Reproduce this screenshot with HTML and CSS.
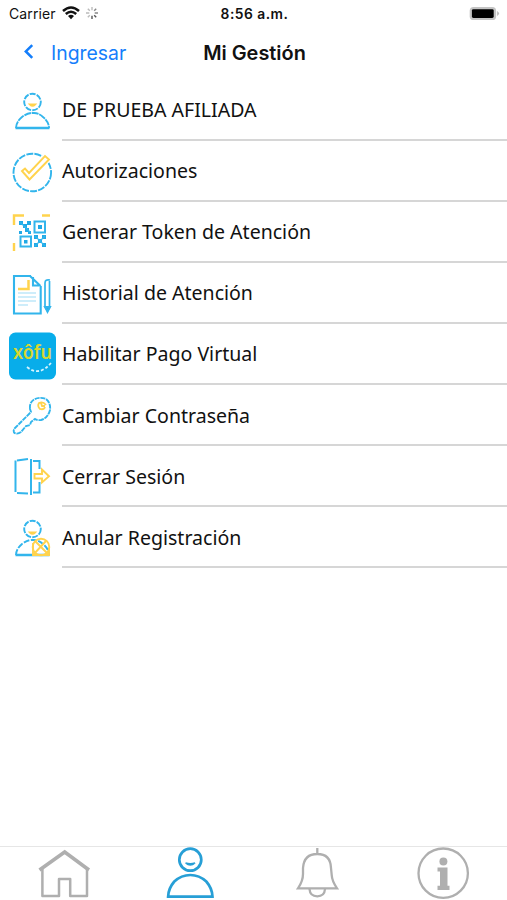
FILE: index.html
```html
<!DOCTYPE html>
<html lang="es">
<head>
<meta charset="utf-8">
<title>Mi Gestión</title>
<link rel="stylesheet" href="styles.css">
</head>
<body>
<div class="app">
  <header class="status">
    <div class="status-left">
      <span class="carrier">Carrier</span>
      <svg class="wifi" viewBox="0 0 18 14"><path d="M1 5Q9-2 17 5M3.8 8Q9 3.5 14.2 8" fill="none" stroke="#111" stroke-width="2.5"/><path d="M6 10Q9 7.7 12 10L9 13.2Z" fill="#111"/></svg>
      <svg class="spinner" viewBox="0 0 12 12" fill="none" stroke-width="1.4"><path d="M6 0V3.3M1.8 1.8 3.8 3.8M0 6H3.3M1.8 10.2 3.8 8.2" stroke="#bbb"/><path d="M6 12V8.7M8.2 8.2 10.2 10.2" stroke="#555"/><path d="M8.7 6H12M8.2 3.8 10.2 1.8" stroke="#888"/></svg>
    </div>
    <span class="clock">8:56 a.m.</span>
    <svg class="battery" viewBox="0 0 32 16"><rect x=".7" y=".7" width="27.3" height="13.6" rx="4" fill="#c4c4c4"/><rect x="3" y="3" width="22.5" height="9" rx="1.5" fill="#000"/><path d="M29 5q4 2.5 0 5z" fill="#bbb"/></svg>
  </header>
  <nav class="navbar">
    <a class="back"><svg class="chevron" viewBox="0 0 10 16"><path d="M8.5 2 2.5 7.9 8.5 14" fill="none" stroke="#147efb" stroke-width="2.4"/></svg><span class="back-label">Ingresar</span></a>
    <h1 class="title">Mi Gestión</h1>
  </nav>
  <ul class="menu">
    <li class="row">
      <svg class="icon blue" viewBox="0 0 62 61"><circle cx="32.5" cy="22" r="8.3" stroke-dasharray="6 1.2"/><path d="M15.5 48H49.5" stroke-width="2.5"/><path d="M16 48Q16 42 22 37 28 32.5 33 33 38 32.5 43 37 49 42 49 48" stroke-dasharray="7 .8"/><path class="yellow" fill="#ffd34d" d="M30 24.5Q32.5 27 35 24.5Z"/></svg>
      <span class="label">DE PRUEBA AFILIADA</span></li>
    <li class="row">
      <svg class="icon blue" viewBox="0 0 62 61"><circle cx="32.3" cy="31.5" r="18.8" stroke-dasharray="7 1.2"/><path d="M22 30 25 27.5 29 32 45 15 49 18.5 29.5 38.5 22 30Z" fill="#fff" stroke="#fff" stroke-width="4"/><path class="yellow" d="M22 30 25 27.5 29 32 45 15 49 18.5 29.5 38.5Z"/></svg>
      <span class="label">Autorizaciones</span></li>
    <li class="row">
      <svg class="icon blue" viewBox="0 0 62 61"><path class="yellow" stroke-width="2.4" d="M24 13.5H14V23M42 13.5H50M14 41V49"/><rect x="34.5" y="19.5" width="10.5" height="11" stroke-width="2"/><rect x="20.5" y="34.5" width="10.5" height="10" stroke-width="2"/><g fill="#20a9e6" stroke="none"><path d="M38 23h4v4h-4zM24 38h3.5v3.5H24zM19 19h4v4h-4zM23 22h4v4h-4zM27 19h4v4h-4zM25 26h4v4h-4zM19 29h3v3h-3zM28 29h3v3h-3zM34 33h4v4h-4zM42 33h4v4h-4zM38 37h4v4h-4zM34 41h4v4h-4zM42 41h4v4h-4z"/></g><path d="m20 20 10 10M35 34l10 10M45 34 35 44" stroke-width="1.2"/></svg>
      <span class="label">Generar Token de Atención</span></li>
    <li class="row">
      <svg class="icon blue" viewBox="0 0 62 61"><path d="M31 13H14V50.5H40.7V23M30 13 40.5 23M33 14V22.5H39" stroke-width="2.1"/><path class="yellow" stroke-width="2.5" d="M28.5 17V26H18"/><path d="M18 30H36M18 34H36M18 38H36M18 42H28" stroke="#9edcf6" stroke-width="1.1"/><path d="M50 17Q45 16 45 20V44L47.5 49 50 44M49.5 18V44" stroke-width="1.7" /><path d="M45 44H50L47.5 48Z" fill="#24ade8"/></svg>
      <span class="label">Historial de Atención</span></li>
    <li class="row">
      <svg class="icon" viewBox="0 0 62 61"><rect x="9" y="8.5" width="47" height="47" rx="6.5" fill="#08adea"/><text class="brand" x="13" y="35" textLength="39" lengthAdjust="spacingAndGlyphs">xôfu</text><path d="M27 43Q39 53 51 39" fill="none" stroke="#d5f4ff" stroke-width="1.8" stroke-dasharray="3 2"/></svg>
      <span class="label">Habilitar Pago Virtual</span></li>
    <li class="row">
      <svg class="icon blue" viewBox="0 0 62 61"><path stroke-dasharray="5 .8" d="M30 24Q29 18 34 14.5 40 11.5 46 14 51 18 50 25 48 33 41 35 37 35.5 35 34L31 37 30 40 26 41 21 47Q17 50 14 47.5 13 45 15 43L31 27Z"/><path class="yellow" stroke-width="1.8" d="M46 20Q43 16 39 18 37 21 40 24 44 25 45 22M41 18 42 21H45"/></svg>
      <span class="label">Cambiar Contraseña</span></li>
    <li class="row">
      <svg class="icon blue" viewBox="0 0 62 61"><path d="M15.5 14.5V46M17 14.5 28 13M31 13V49M17 47 28 47.5M33 15H39.5V23M39.5 36V46.5H33" stroke-width="2" /><path class="yellow" stroke-width="1.9" d="M34.5 28H42V23.5L49 30.3 42 36.5V32.5H34.5Z"/></svg>
      <span class="label">Cerrar Sesión</span></li>
    <li class="row">
      <svg class="icon blue" viewBox="0 0 62 61"><circle cx="32.5" cy="22" r="8.3" stroke-dasharray="6 1.2"/><path d="M15.5 48H49.5" stroke-width="2.5"/><path d="M16 48Q16 42 22 37 28 32.5 33 33 38 32.5 43 37 49 42 49 48" stroke-dasharray="6 1.5"/><path class="yellow" fill="#ffd34d" d="M30 25.5Q32.5 28 35 25.5Z"/><g class="yellow"><circle cx="41" cy="40" r="8.3"/><path d="M35 34 49 48M33 48 46 34M33 36V48H49V41"/></g></svg>
      <span class="label">Anular Registración</span></li>
  </ul>
  <footer class="tabs">
    <a class="tab"><svg class="tab-icon" viewBox="0 0 60 53"><path d="M6.5 23 31.7 5 56 23" stroke-width="3.6"/><path d="M9.4 22V49H26V32H37.2V49H54V22" stroke-width="2.5" stroke-linejoin="round"/></svg></a>
    <a class="tab active"><svg class="tab-icon" viewBox="0 0 60 53"><circle cx="30.3" cy="12.7" r="11"/><path d="M25.6 16Q30.3 17.5 35 16 30.3 20 25.6 16Z" stroke-width="1.5"/><path d="M8.1 49.7Q8.3 41.5 14.3 34.5 21.3 28 30.3 28 39.3 28 46.3 34.5 52.3 41.5 52.5 49.7Z"/></svg></a>
    <a class="tab"><svg class="tab-icon" viewBox="0 0 60 53"><path d="M30.3 1V7M11 41.3Q16 34 16 27V21Q17 7 30.3 7 43.5 7 44 21L44.7 28Q45 34 50 41.3Z"/><path d="M22.5 42Q23 49.3 30.3 49.3 37.5 49.3 38 42"/></svg></a>
    <a class="tab"><svg class="tab-icon" viewBox="0 0 60 53"><circle cx="29.2" cy="26.2" r="24.7"/><g class="info"><circle cx="29.4" cy="14.6" r="4"/><path d="M23.5 20.5H33.5V38.8H35.5V43H23.5V38.8H26V24.5H23.5Z"/></g></svg></a>
  </footer>
</div>
</body>
</html>
```
FILE: styles.css
```css
* { box-sizing: border-box; }
body { margin: 0; background: #fff; color: #111; font-family: Inter, "Liberation Sans", sans-serif; }
.app { width: 507px; height: 900px; display: flex; flex-direction: column; overflow: hidden; }
.status { height: 27px; display: grid; grid-template-columns: 1fr auto 1fr; align-items: center; padding: 0 7px 0 9px; font-size: 13.5px; }
.status-left { display: flex; align-items: center; }
.carrier { width: 47px; font-size: 14px; letter-spacing: .1px; }
.wifi { width: 18px; height: 14px; margin-left: 6px; margin-top: -2px; }
.spinner { width: 12px; height: 12px; margin-left: 6px; margin-top: -2px; }
.clock { font-size: 13.8px; font-weight: 600; letter-spacing: .5px; }
.battery { width: 31px; height: 16px; justify-self: end; }
.navbar { height: 52.5px; display: grid; grid-template-columns: 1fr auto 1fr; align-items: center; padding: 0 0 1px; }
.back { display: flex; align-items: center; padding-left: 23px; color: #147efb; font-size: 19.4px; }
.chevron { width: 11px; height: 17px; margin-right: 17px; margin-top: -3px; }
.title { margin: 0; font-size: 19.9px; font-weight: 600; position: relative; left: 1px; }
.menu { list-style: none; margin: 0; padding: 0; flex: 1; }
.row { display: flex; height: 61.1px; }
.icon { width: 62px; height: 61px; flex: none; }
.blue { fill: none; stroke: #32b5ec; stroke-width: 1.9; }
.yellow { stroke: #ffd34d; }
.brand { font: 600 19px "Noto Sans", sans-serif; fill: #d8d72f; }
.label { flex: 1; display: flex; align-items: center; padding-top: 1px; border-bottom: 2px solid #d6d6d6; font-family: "Noto Sans", sans-serif; font-size: 19.55px; white-space: nowrap; }
.tabs { height: 54px; display: grid; grid-template-columns: repeat(4, 1fr); border-top: 1px solid #e6e6e6; }
.tab { display: flex; justify-content: center; }
.tab-icon { width: 60px; height: 53px; fill: none; stroke: #afafaf; stroke-width: 2.3; }
.active .tab-icon { stroke: #279fd6; stroke-width: 2.7; }
.info { fill: #afafaf; stroke: none; }
```
